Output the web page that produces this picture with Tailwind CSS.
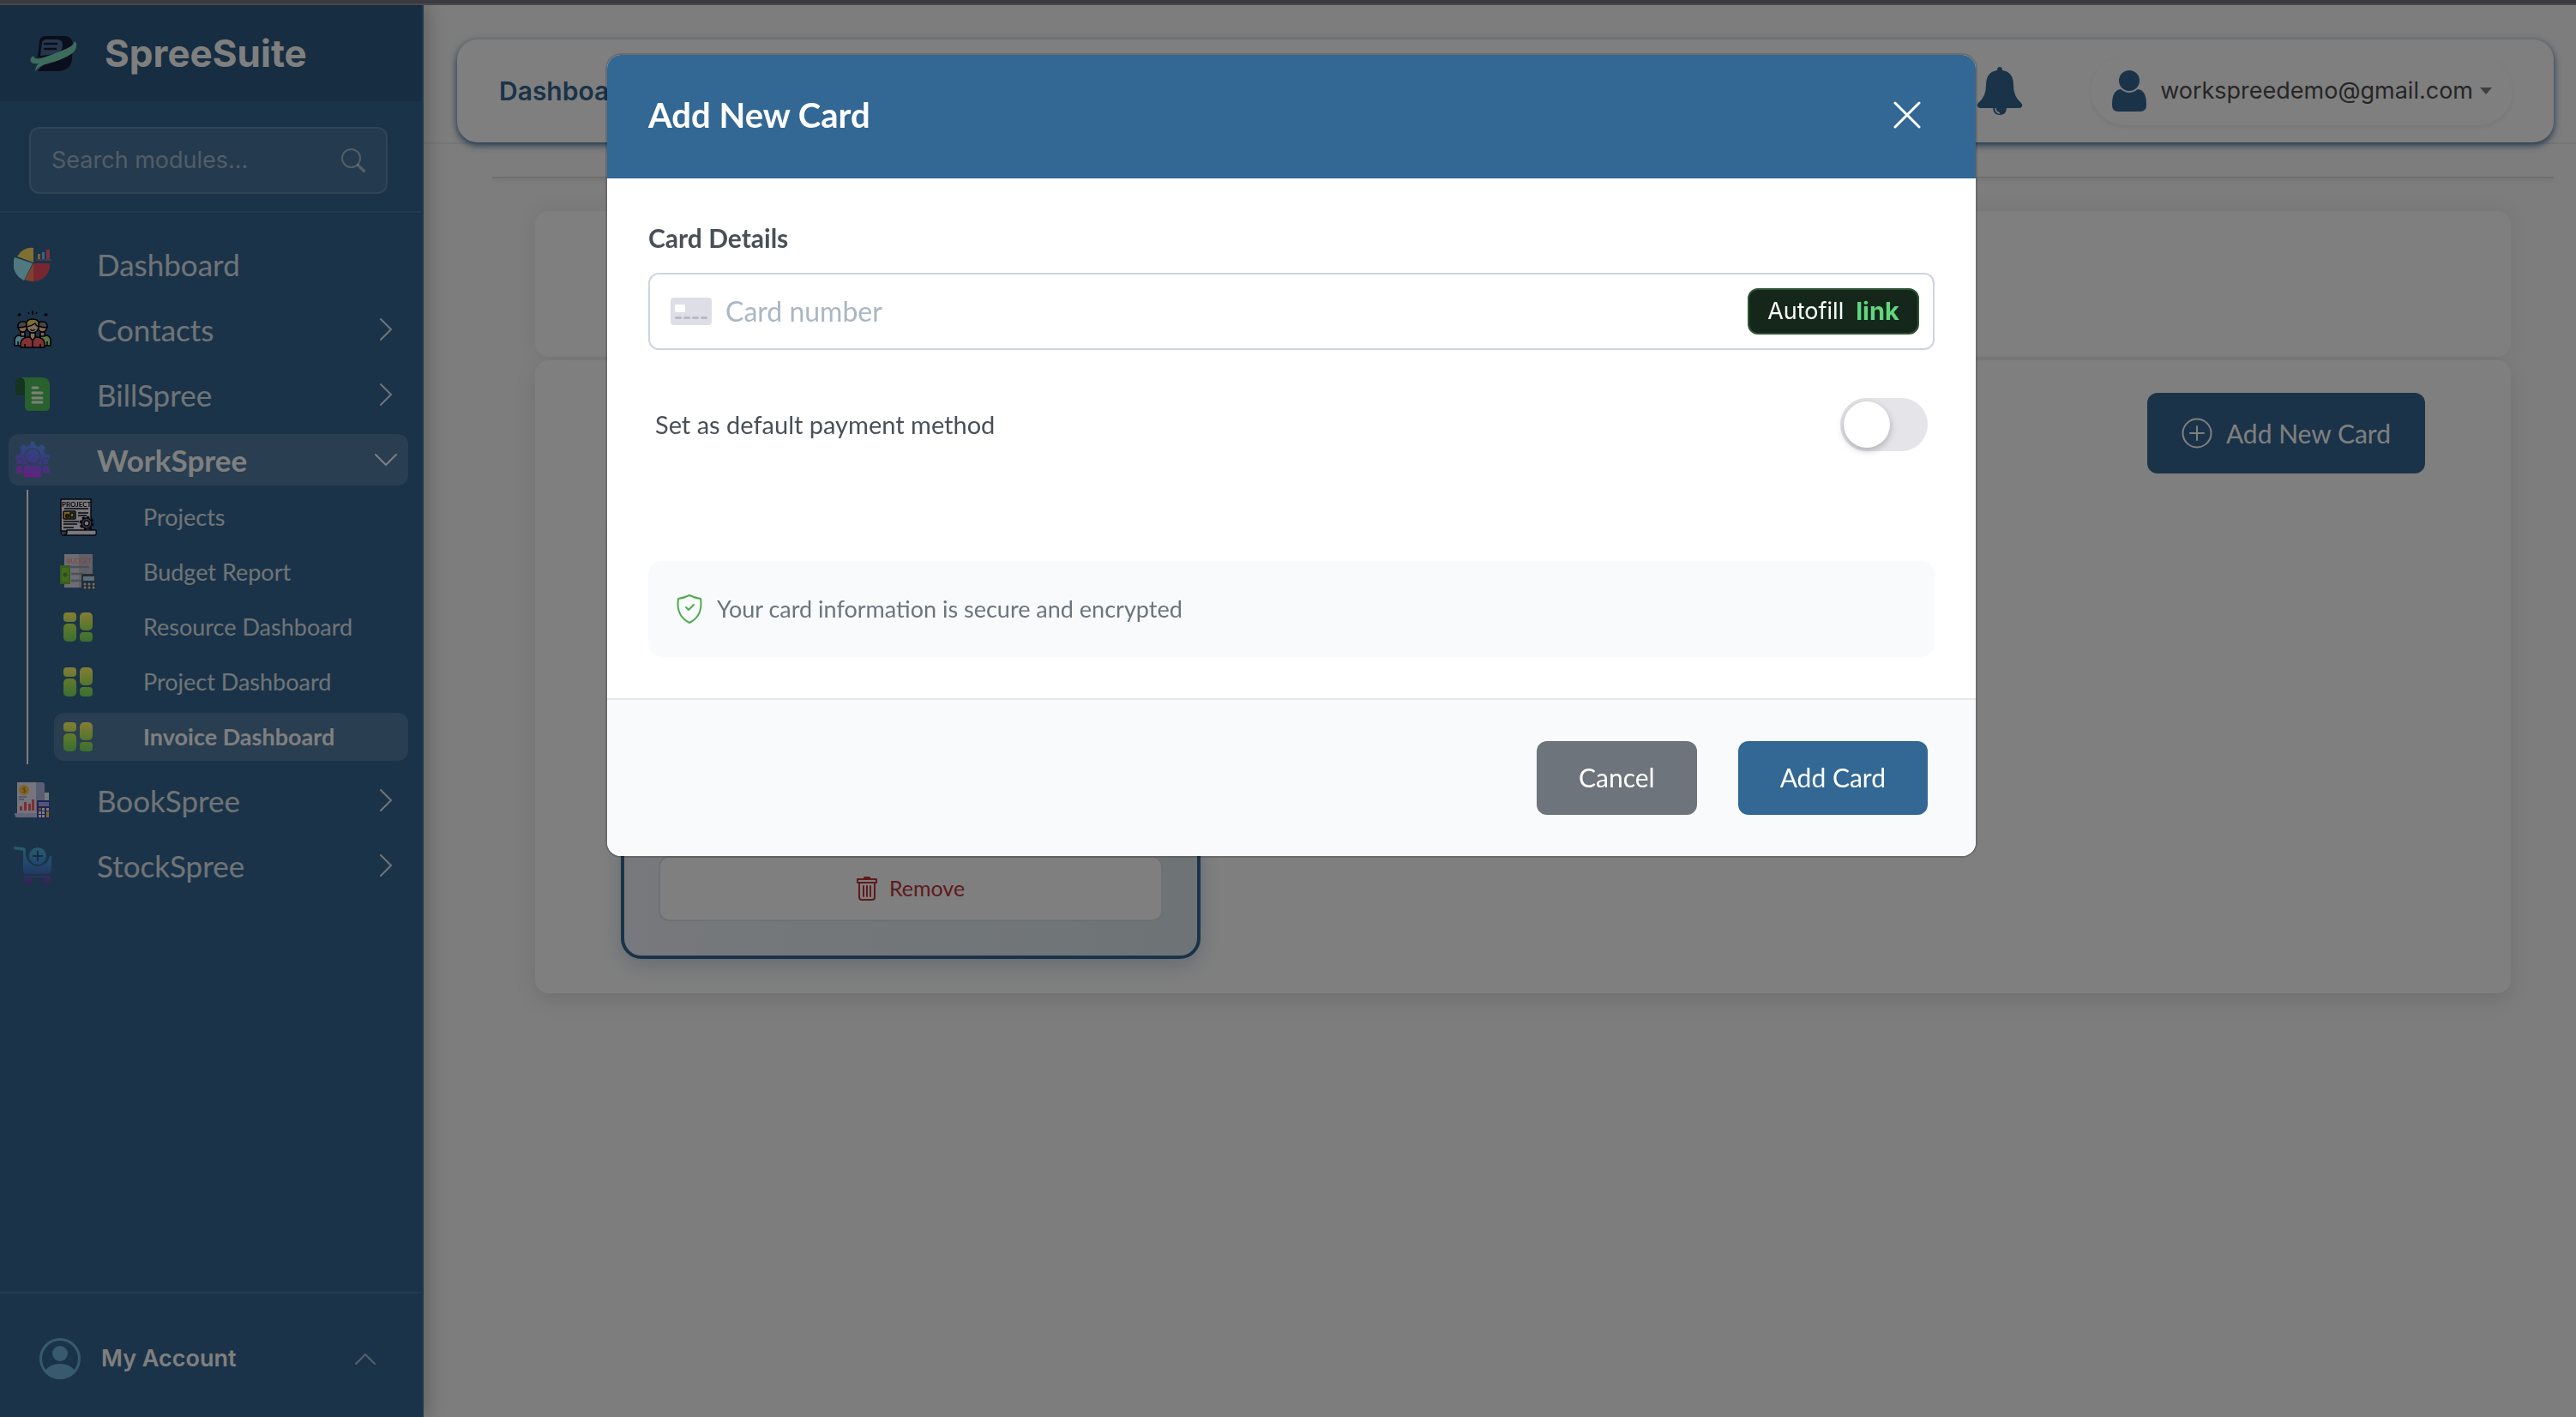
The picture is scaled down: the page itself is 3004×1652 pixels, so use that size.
<!DOCTYPE html>
<html lang="en">
<head>
  <meta charset="UTF-8">
  <meta name="viewport" content="width=device-width, initial-scale=1.0">
  <title>SpreeSuite - Payment Methods</title>
  <script src="https://cdn.jsdelivr.net/npm/@tailwindcss/browser@4"></script>
</head>
<body class="h-screen flex flex-col overflow-hidden bg-[#fafafa] font-['Lato',sans-serif]">

  <!-- shared icons -->
  <svg class="absolute w-0 h-0" aria-hidden="true">
    <linearGradient id="tileFill" x1="0" y1="0" x2="0" y2="44" gradientUnits="userSpaceOnUse"><stop offset=".1" stop-color="#b4a648"/><stop offset=".45" stop-color="#80a03c"/><stop offset=".9" stop-color="#4c9440"/></linearGradient>
    <symbol id="chevron" viewBox="0 0 16 28"><path d="M2 2l12 12L2 26" fill="none" stroke="currentColor" stroke-width="2" stroke-linecap="round" stroke-linejoin="round"/></symbol>
    <symbol id="tiles" viewBox="0 0 44 44">
      <g fill="url(#tileFill)">
        <rect x="5" y="5" width="15" height="11" rx="4"/>
        <rect x="5" y="18" width="15" height="21" rx="5"/>
        <rect x="24" y="5" width="15" height="21" rx="5"/>
        <rect x="24" y="28" width="15" height="11" rx="4"/>
      </g>
    </symbol>
  </svg>

  <div class="relative z-50 h-[6px] shrink-0 bg-[#3a3a44] border-b-2 border-[#4c4744]"></div>

  <div class="flex flex-1 min-h-0">

    <!-- Sidebar -->
    <aside class="relative z-10 flex flex-col w-[494px] shrink-0 bg-[#346692] border-r-2 border-[#3e7099] text-white shadow-[4px_0_20px_rgba(0,0,0,0.25)]">
      <div class="flex items-center gap-8 h-28 pl-[34px] bg-black/10">
        <svg class="w-14 h-11" viewBox="0 0 56 44">
          <path d="M10 26L12 8q1-6 7-6h22q9 0 10 9l-2 6-18 8q-4 2-9 2H9z" fill="#161c38"/>
          <path d="M13 25l2-15q1-4 5-4h14q6 1 5 8-1 7-9 9-8 1-17 2z" fill="#4a6e98"/>
          <path d="M18 11h14M18 17h13" stroke="#161c38" stroke-width="2.500" stroke-linecap="round" fill="none"/>
          <path d="M50 22q2 20-16 21H10q5-8 14-11 18-4 26-10z" fill="#161c38"/>
          <path d="M5 25q-5 3-3 7 2 3 9 2-4 4-4 9 5-6 12-8 20-5 30-12 6-4 6-9 1-4-2-6-1 5-10 9-14 6-26 10Q6 31 5 25z" fill="#7ad8b8"/>
        </svg>
        <span class="text-[44px] leading-none font-bold font-['Inter',sans-serif]">SpreeSuite</span>
      </div>

      <div class="pt-[30px] pb-5 pl-[34px] pr-10 border-b-2 border-white/10">
        <label class="flex items-center h-[78px] px-6 rounded-xl border-2 border-white/15 bg-white/10">
          <input type="search" aria-label="Search modules" placeholder="Search modules..." class="flex-1 min-w-0 text-[27px] font-['Inter',sans-serif] placeholder:text-white/50 outline-none">
          <svg class="w-7 h-7 text-white/50" viewBox="0 0 28 28" fill="none" stroke="currentColor"><circle cx="11.500" cy="11.500" r="10.500" stroke-width="2"/><path d="M19.500 19.500l7 7" stroke-width="3.500" stroke-linecap="round"/></svg>
        </label>
      </div>

      <nav class="flex-1 pt-[30px] pl-[10px] pr-4 text-[35px]">
        <ul>
          <li class="mb-4">
            <a href="#" class="flex items-center gap-[53px] h-[60px] px-[6px] text-white/85">
              <svg class="w-11 h-11 brightness-150" viewBox="0 0 44 44">
                <path d="M23 20V3A19 19 0 0 0 4 13z" fill="#b49440"/>
                <path d="M22 21L1 14a21 21 0 0 0 11 27z" fill="#6aa0b4"/>
                <path d="M23 21h19a19 19 0 0 1-19 21z" fill="#a03440"/>
                <path d="M23 21v21q-6 0-10-2z" fill="#b45a3c"/>
                <path d="M26 17h18" stroke="#6a5070" stroke-width="1.500"/>
                <path d="M28 10h3v6h-3z" fill="#c08040"/><path d="M33 8h3v8h-3z" fill="#4888c8"/><path d="M38 5h4v11h-4z" fill="#b04050"/>
              </svg>
              Dashboard
            </a>
          </li>
          <li class="mb-4">
            <button type="button" class="flex items-center gap-[53px] w-full h-[60px] pl-[6px] pr-[18px] text-white/85">
              <svg class="w-11 h-11 brightness-150" viewBox="0 0 44 44" stroke="#000" stroke-width="1.500" stroke-linejoin="round">
                <path d="M1 41v-7q1-5 6-5h6v12z" fill="#6aa0c8"/><path d="M43 41v-7q-1-5-6-5h-6v12z" fill="#7ca060"/>
                <path d="M5 41v-5M39 41v-5" fill="none"/>
                <path d="M8 25h5v5H8zM31 25h5v5h-5z" fill="#b08870"/>
                <circle cx="10.500" cy="20" r="5" fill="#b08870"/><circle cx="33.500" cy="20" r="5" fill="#b08870"/>
                <path d="M5 20q-1-7 6-7 5 0 5 5-6 2-11 2zM39 20q1-7-6-7-5 0-5 5 6 2 11 2z" fill="#5c5c68"/>
                <path d="M8 43v-5q1-6 8-7h12q7 1 8 7v5z" fill="#b04448"/>
                <path d="M19 26h6v5l-3 4-3-4z" fill="#c09878"/><path d="M13 43v-4M31 43v-4M22 36v7" fill="none"/>
                <circle cx="22" cy="19" r="7" fill="#b89474"/>
                <path d="M15 19q-2-9 7-9t7 9q-3-1-4-4-4 3-10 4z" fill="#b09048"/>
                <path d="M19.500 22q2.500 3 5 0" fill="none"/>
                <path d="M22 0v5M17 2l1 2M27 2l-1 2M6.500 3v4M4.500 5h4M37.500 3v4M35.500 5h4" fill="none"/>
              </svg>
              <span class="flex-1 text-left">Contacts</span>
              <svg class="w-4 h-7"><use href="#chevron"/></svg>
            </button>
          </li>
          <li class="mb-4">
            <button type="button" class="flex items-center gap-[53px] w-full h-[60px] pl-[6px] pr-[18px] text-white/85">
              <svg class="w-11 h-11 brightness-150" viewBox="0 0 44 44">
                <path d="M2 9q0-7 7-7h6l-1 21H6q-4 0-4-4z" fill="#1c4428"/>
                <path d="M8 2h25q9 0 9 9v25q0 5-5 5H18q-5 0-5-5V9q0-6-5-7z" fill="#36803e"/>
                <path d="M22 14h6M22 20h11M22 26h11M22 31h11" stroke="#a8b8a0" stroke-width="3" stroke-linecap="round"/>
              </svg>
              <span class="flex-1 text-left">BillSpree</span>
              <svg class="w-4 h-7"><use href="#chevron"/></svg>
            </button>
          </li>
          <li class="mb-3">
            <button type="button" class="flex items-center gap-[53px] w-full h-[60px] pl-[6px] pr-[12px] rounded-xl bg-white/15 font-bold">
              <svg class="w-11 h-11 brightness-150" viewBox="0 0 44 44">
                <linearGradient id="teamFill" x1="30" y1="0" x2="18" y2="44" gradientUnits="userSpaceOnUse"><stop offset="0" stop-color="#3c6cb4"/><stop offset=".5" stop-color="#4c4cac"/><stop offset="1" stop-color="#8c28a8"/></linearGradient>
                <path d="M20 1h4l1 4 4 2 4-3 4 4-2 4 2 4 5 1v5l-4 2-3 8H9l-3-8-4-2v-5l5-1 2-4-2-4 4-4 4 3 4-2z" fill="url(#teamFill)"/>
                <g fill="url(#teamFill)" stroke="#3a5470" stroke-width="1.500">
                  <circle cx="22" cy="18" r="9"/>
                  <circle cx="7" cy="24" r="4"/><circle cx="37" cy="24" r="4"/>
                  <path d="M1 38l2-9q4-2 8 0v9zM43 38l-2-9q-4-2-8 0v9z"/>
                  <path d="M11 43V33q1-6 6-6 5 3 10 0 5 0 6 6v10z"/>
                </g>
              </svg>
              <span class="flex-1 text-left">WorkSpree</span>
              <svg class="w-7 h-4" viewBox="0 0 28 16" fill="none" stroke="currentColor" stroke-width="2" stroke-linecap="round" stroke-linejoin="round"><path d="M2 2l12 12L26 2"/></svg>
            </button>
            <ul class="flex flex-col gap-2 mt-[5px] ml-[21px] py-1 pl-[30px] border-l-2 border-white text-[27px] text-white/85">
              <li>
                <a href="#" class="flex items-center gap-[54px] h-14 px-[6px]">
                  <svg class="w-11 h-11 brightness-150" viewBox="0 0 44 44" stroke="#0a0a10" stroke-width="1.500" stroke-linejoin="round">
                    <path d="M2 1h35v37H2z" fill="#a0a0a8"/>
                    <text x="3" y="10" font-size="8" font-weight="700" stroke="none" fill="#0a0a10" font-family="Lato">PROJECT</text>
                    <path d="M6 12h28"/><rect x="5" y="15" width="14" height="9" rx="1" fill="#a08430"/><path d="M8 19h3v3H8z" fill="#a04030"/><path d="M13 17h4v5h-4z" fill="#789838"/>
                    <path d="M22 17h12M22 20h10M5 27h18M5 30h16M5 34h12"/>
                    <circle cx="32" cy="29" r="7" fill="#50505a" stroke-width="3" stroke-dasharray="3 2.500"/><circle cx="32" cy="29" r="6" fill="#50505a"/><circle cx="32" cy="29" r="3" fill="#a0a0a8"/>
                    <path d="M2 38q0 5 4 5h36q2-1 1-6H9v3q-1 3-3 3" fill="#a0a0a8"/>
                  </svg>
                  Projects
                </a>
              </li>
              <li>
                <a href="#" class="flex items-center gap-[54px] h-14 px-[6px]">
                  <svg class="w-11 h-11 brightness-150" viewBox="0 0 44 44">
                    <path d="M6 1h17v39H6z" fill="#90929a"/><path d="M23 1h16v39H23z" fill="#80828a"/>
                    <text x="9" y="12" font-size="7" fill="#b05040" font-family="Lato">BUDGET</text>
                    <path d="M12 16h23M14 24h14M14 32h12" stroke="#686a74" stroke-width="2.500"/>
                    <path d="M1 14h12v22H1z" fill="#4c7c24"/><path d="M3 17h8v16H3z" fill="#5c8c2c"/><circle cx="7" cy="25" r="2.500" fill="#3c6420"/>
                    <rect x="26" y="24" width="17" height="19" rx="2" fill="#303c48"/><path d="M28 27h13v5H28z" fill="#7c90a4"/>
                    <g fill="#90989f"><circle cx="30" cy="36" r="1.500"/><circle cx="35" cy="36" r="1.500"/><circle cx="40" cy="36" r="1.500"/><circle cx="30" cy="40" r="1.500"/><circle cx="35" cy="40" r="1.500"/><circle cx="40" cy="40" r="1.500"/></g>
                  </svg>
                  Budget Report
                </a>
              </li>
              <li>
                <a href="#" class="flex items-center gap-[54px] h-14 px-[6px]">
                  <svg class="w-11 h-11 brightness-150"><use href="#tiles"/></svg>
                  Resource Dashboard
                </a>
              </li>
              <li>
                <a href="#" class="flex items-center gap-[54px] h-14 px-[6px]">
                  <svg class="w-11 h-11 brightness-150"><use href="#tiles"/></svg>
                  Project Dashboard
                </a>
              </li>
              <li>
                <a href="#" class="flex items-center gap-[54px] h-14 px-[6px] rounded-xl bg-white/15 font-bold text-white">
                  <svg class="w-11 h-11 brightness-150"><use href="#tiles"/></svg>
                  Invoice Dashboard
                </a>
              </li>
            </ul>
          </li>
          <li class="mb-4">
            <button type="button" class="flex items-center gap-[53px] w-full h-[60px] pl-[6px] pr-[18px] text-white/85">
              <svg class="w-11 h-11 brightness-150" viewBox="0 0 44 44">
                <path d="M34 13h7v20h-7z" fill="#a0a4b4"/><path d="M4 1h30q2 1 2 4v35H4z" fill="#9c9ca8"/><path d="M26 1h8q2 1 2 4v30H26z" fill="#787e98"/>
                <path d="M1 37h26v5H4q-3 0-3-5z" fill="#8488a0"/>
                <circle cx="12" cy="10" r="6" fill="#b08430"/><text x="10" y="13" font-size="8" font-weight="700" fill="#7c5418" font-family="Lato">$</text>
                <path d="M6 18h9M6 21h6" stroke="#4c5068" stroke-width="1"/>
                <path d="M7 29h3v5H7zM12 24h3v10h-3zM17 26h3v8h-3zM21 21h3v13h-3z" fill="#b03c40"/>
                <rect x="27" y="22" width="15" height="22" rx="1" fill="#2c3270"/><path d="M29 24h12v5H29z" fill="#6c749c"/>
                <path d="M29 31h3v3h-3z" fill="#b05c34"/><path d="M33 31h3v3h-3zM38 31h3v3h-3zM29 35h3v3h-3zM33 35h3v3h-3zM29 39h3v3h-3zM33 39h3v3h-3z" fill="#a4a8b8"/><path d="M38 35h3v7h-3z" fill="#b89028"/>
              </svg>
              <span class="flex-1 text-left">BookSpree</span>
              <svg class="w-4 h-7"><use href="#chevron"/></svg>
            </button>
          </li>
          <li>
            <button type="button" class="flex items-center gap-[53px] w-full h-[60px] pl-[6px] pr-[18px] text-white/85">
              <svg class="w-11 h-11 brightness-150" viewBox="0 0 44 44">
                <linearGradient id="cartFill" x1="0" y1="0" x2="0" y2="44" gradientUnits="userSpaceOnUse"><stop offset="0" stop-color="#347c90"/><stop offset=".45" stop-color="#2c6094"/><stop offset=".7" stop-color="#304c80"/><stop offset="1" stop-color="#502c6c"/></linearGradient>
                <g fill="url(#cartFill)">
                  <path d="M0 0l12 1q2 1 2 4v4q2 13 14 14 12-1 14-12h2v16q0 5-6 5H13q-2 0-2-4V5L0 3z"/>
                  <circle cx="28" cy="11" r="10.500" stroke="#22465f" stroke-width="1"/>
                  <path d="M12 34h30v2H12z"/><circle cx="17" cy="39" r="5"/><circle cx="39" cy="39" r="5"/>
                </g>
                <path d="M28 5v12M22 11h12" stroke="#1c3c58" stroke-width="2"/>
              </svg>
              <span class="flex-1 text-left">StockSpree</span>
              <svg class="w-4 h-7"><use href="#chevron"/></svg>
            </button>
          </li>
        </ul>
      </nav>

      <button type="button" class="flex items-center h-[146px] pl-[46px] pr-[54px] pt-2 border-t-2 border-white/10 font-['Inter',sans-serif]">
        <svg class="w-12 h-12 mr-6" viewBox="0 0 48 48">
          <clipPath id="avatarClip"><circle cx="24" cy="24" r="24"/></clipPath>
          <circle cx="24" cy="24" r="22.500" fill="none" stroke="#70b4dc" stroke-width="3"/>
          <circle cx="24" cy="18" r="9" fill="#70b4dc"/>
          <ellipse cx="24" cy="44" rx="19" ry="14" fill="#70b4dc" clip-path="url(#avatarClip)"/>
        </svg>
        <span class="flex-1 text-left text-[27px] font-semibold">My Account</span>
        <svg class="w-6 h-[14px] text-white/60" viewBox="0 0 24 14" fill="none" stroke="currentColor" stroke-width="2" stroke-linecap="round" stroke-linejoin="round"><path d="M1 13L12 2l11 11"/></svg>
      </button>
    </aside>

    <!-- Page -->
    <main class="flex-1 min-w-0">
      <div class="pt-10 pl-[39px] pr-[26px] border-b-2 border-[#ececec]">
        <header class="flex items-center h-30 pl-[49px] pr-12 rounded-3xl bg-white shadow-[0_3px_8px_#346692] font-['Inter',sans-serif]">
          <h1 class="flex-1 text-[30px] font-semibold text-[#346692]">Dashboard</h1>
          <button type="button" aria-label="Notifications" class="mr-[79px] text-[#346692]">
            <svg class="w-[54px] h-14" viewBox="0 0 54 56" fill="currentColor">
              <path d="M24 4q0-4 3-4t3 4q13 2 13 17 0 14 9 21 2 2 1 4-1 2-3 2H4q-2 0-3-2-1-2 1-4 9-7 9-21Q11 6 24 4z"/>
              <path d="M19 47h16q0 9-8 9t-8-9z"/>
              <path d="M22 48q0 5 5 6" fill="none" stroke="#fff" stroke-width="1.500"/>
            </svg>
          </button>
          <button type="button" class="flex items-center h-20 pl-[25px] pr-6 rounded-full bg-white shadow-[0_2px_6px_rgba(0,0,0,0.08)] text-[27px] text-[#4c4c4c]">
            <svg class="w-10 h-12 mr-4 text-[#346692]" viewBox="0 0 40 48" fill="currentColor">
              <circle cx="20" cy="12" r="12"/>
              <path d="M10 22q10 8 20 0 10 1 10 18 0 8-7 8H7q-7 0-7-8 0-17 10-18z"/>
            </svg>
            workspreedemo@gmail.com
            <svg class="w-[14px] h-2 ml-2 text-[#7c7c7c]" viewBox="0 0 14 8" fill="currentColor"><path d="M0 0h14L7 8z"/></svg>
          </button>
        </header>
      </div>

      <hr class="mt-[38px] ml-20 mr-[26px] border-t-2 border-[#dedede] shadow-[0_2px_4px_rgba(0,0,0,0.1)]">

      <div class="flex flex-col gap-1 mt-[38px] ml-[130px] mr-[76px]">
        <section class="h-[170px] rounded-2xl bg-white shadow-[0_0_24px_rgba(0,0,0,0.07)]"></section>

        <section class="flex items-start justify-between min-h-[738px] pt-[38px] pb-10 pl-[100px] pr-[100px] rounded-2xl bg-white shadow-[0_8px_24px_rgba(0,0,0,0.1)]">
          <article class="flex flex-col justify-end self-end w-[676px] h-[520px] p-[40px] rounded-3xl border-4 border-[#346692] bg-linear-to-r from-[#eef2f8] to-[#dce8ec] shadow-[0_8px_24px_rgba(52,102,146,0.25)]">
            <button type="button" class="flex items-center justify-center gap-[14px] h-[76px] rounded-xl border-2 border-[#dce2e8] bg-white text-[25px] text-[#c0343f]">
              <svg class="w-6 h-7" viewBox="0 0 24 28" fill="none" stroke="currentColor" stroke-width="2" stroke-linejoin="round" stroke-linecap="round">
                <path d="M1 3h22v4H1zM9 3V1h6v2M3 7v17q0 3 3 3h12q3 0 3-3V7M8 11v12M12 11v12M16 11v12"/>
              </svg>
              Remove
            </button>
          </article>
          <button type="button" class="flex items-center gap-4 h-[94px] px-10 rounded-xl bg-[#346692] text-[30px] text-white">
            <svg class="w-9 h-9" viewBox="0 0 36 36" fill="none" stroke="currentColor" stroke-width="2" stroke-linecap="round"><circle cx="18" cy="18" r="16.500"/><path d="M18 10v16M10 18h16"/></svg>
            Add New Card
          </button>
        </section>
      </div>
    </main>
  </div>

  <!-- Add card modal -->
  <div class="fixed inset-0 z-40 flex items-start justify-center pt-16 pl-2 bg-black/50">
    <form role="dialog" aria-labelledby="modal-title" class="w-[1596px] max-w-full rounded-2xl bg-white shadow-[0_0_0_2px_rgba(0,0,0,0.15)]">
      <div class="flex items-center justify-between h-36 pb-1 pl-12 pr-16 rounded-t-2xl bg-[#336794] text-white">
        <h2 id="modal-title" class="text-[40px] font-bold">Add New Card</h2>
        <button type="button" aria-label="Close">
          <svg class="w-8 h-8" viewBox="0 0 32 32" fill="none" stroke="currentColor" stroke-width="3" stroke-linecap="round"><path d="M2 2l28 28M30 2L2 30"/></svg>
        </button>
      </div>

      <div class="p-12">
        <label for="card-number" class="block mb-5 text-[30px] leading-[42px] font-bold text-[#495057]">Card Details</label>
        <div class="flex items-center h-[90px] pl-6 pr-4 rounded-xl border-2 border-[#ced4e0]">
          <svg class="w-12 h-8 mr-4" viewBox="0 0 48 32">
            <rect width="48" height="32" rx="4" fill="#dedee6"/>
            <rect x="5" y="8" width="12" height="9" rx="2" fill="#fff"/>
            <path d="M6.500 23.500h5M16.500 23.500h5M26.500 23.500h5M36.500 23.500h5" stroke="#b8b8c8" stroke-width="3" stroke-linecap="round"/>
          </svg>
          <input id="card-number" type="text" placeholder="Card number" class="flex-1 min-w-0 text-[32px] placeholder:text-[#aab7c4] outline-none">
          <button type="button" class="flex items-center justify-center gap-[14px] w-50 h-[54px] rounded-xl border-2 border-[#2f5236] bg-[#15271b] font-['Inter',sans-serif] text-[27px] text-white">
            Autofill
            <span class="text-[29px] font-bold text-[#62d67f]">link</span>
          </button>
        </div>

        <div class="flex items-center justify-between mt-14 h-[62px] pl-2 pr-2">
          <label for="default-method" class="text-[29px] text-[#495057]">Set as default payment method</label>
          <input id="default-method" type="checkbox" role="switch" class="appearance-none w-[102px] h-[62px] p-1 rounded-full bg-[#e4e4e9] before:block before:w-[54px] before:h-[54px] before:rounded-full before:bg-white before:shadow-[0_3px_8px_rgba(0,0,0,0.25)] checked:bg-[#336794]">
        </div>

        <div class="flex items-center gap-4 mt-32 h-28 px-8 rounded-2xl bg-[#f8fafb] text-[27px] text-[#6c757d]">
          <svg class="w-8 h-[34px]" viewBox="0 0 32 34" fill="none" stroke="#50ab50" stroke-width="2" stroke-linecap="round" stroke-linejoin="round">
            <path d="M16 1q6 3 13 4 3 20-13 28Q0 25 3 5q7-1 13-4z"/><path d="M12 15l3 3 6-6"/>
          </svg>
          Your card information is secure and encrypted
        </div>
      </div>

      <div class="flex items-center justify-end gap-12 h-[184px] px-14 rounded-b-2xl border-t-2 border-[#e5e8ec] bg-[#f8fafc] text-[30px] text-white">
        <button type="button" class="h-[86px] px-[49px] pb-[2px] rounded-xl bg-[#6d747b]">Cancel</button>
        <button type="submit" class="h-[86px] px-[49px] pb-[2px] rounded-xl bg-[#336794]">Add Card</button>
      </div>
    </form>
  </div>

</body>
</html>
